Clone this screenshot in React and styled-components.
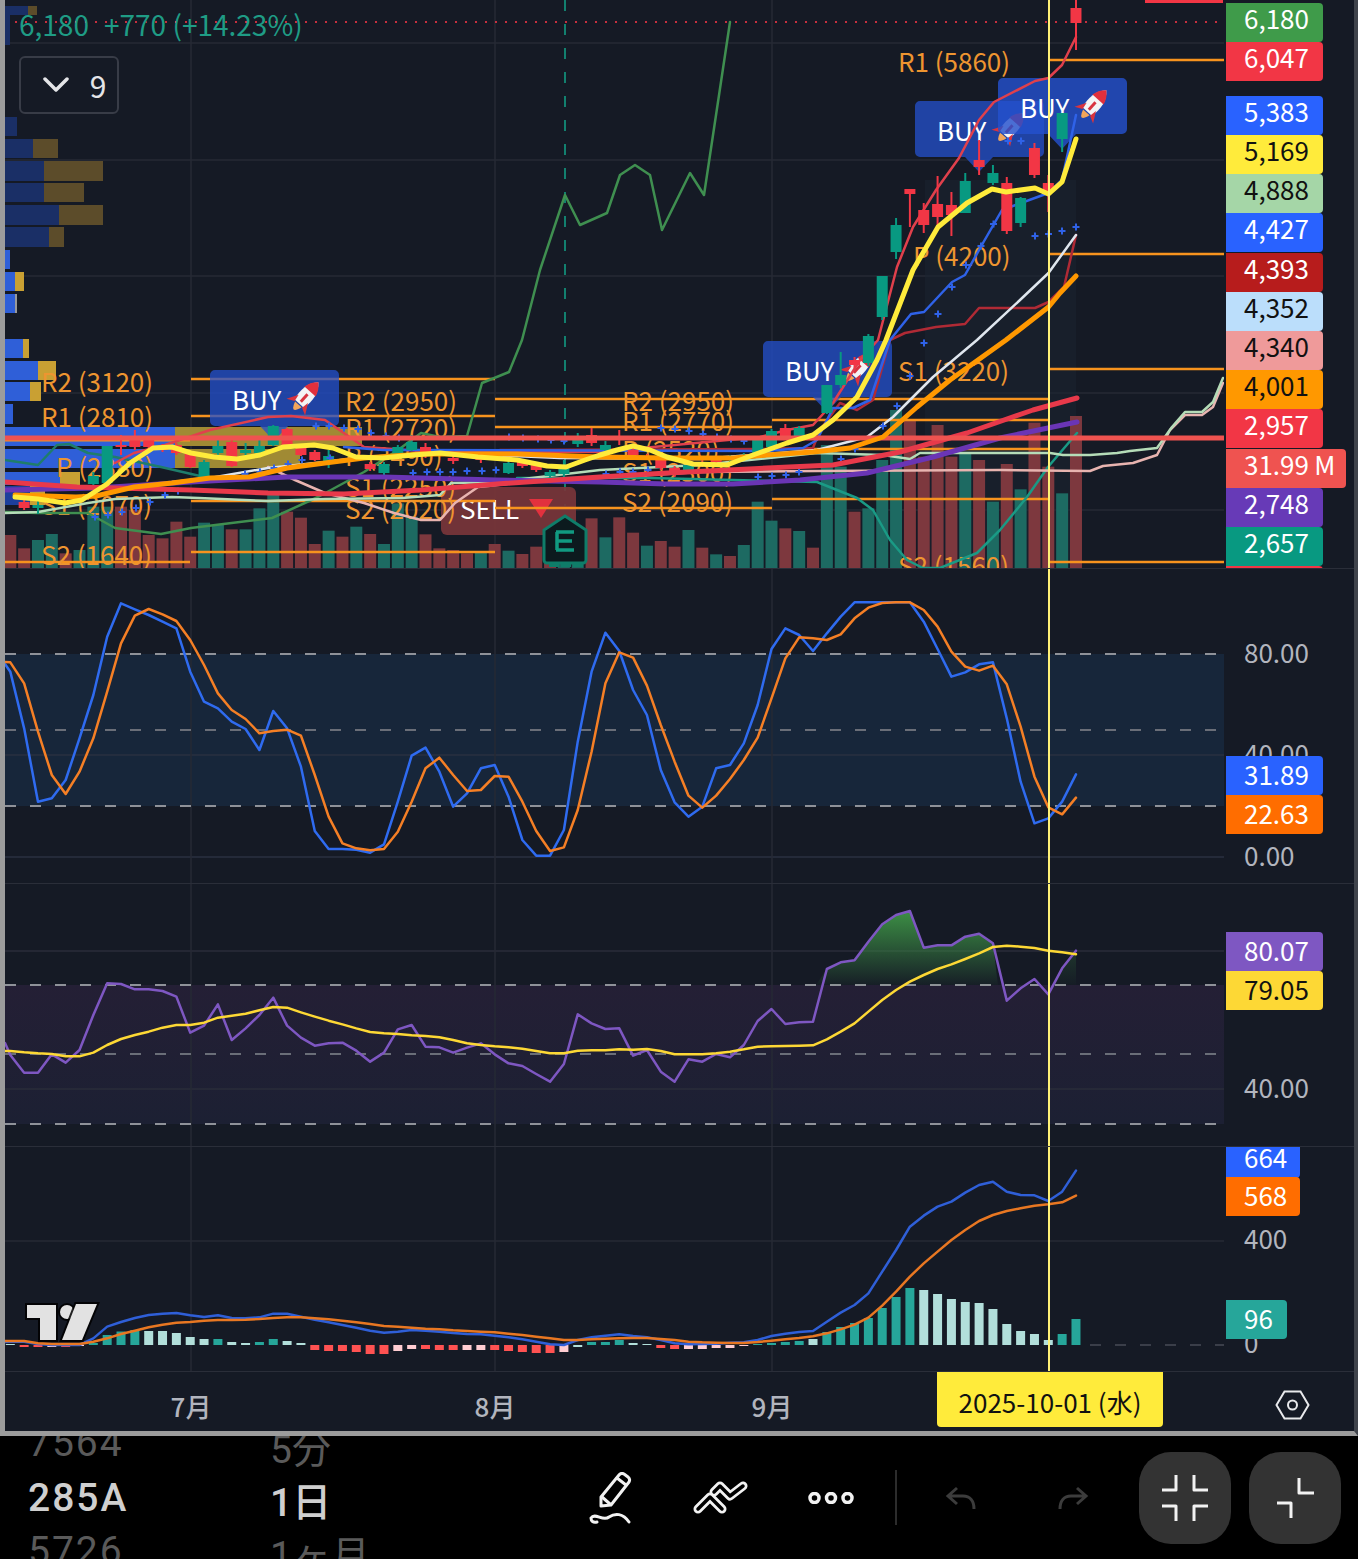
import styled, { createGlobalStyle } from "styled-components";

const GlobalStyle = createGlobalStyle`
  html, body {
    margin: 0;
    background: #000;
  }
  #root {
    width: 1358px;
    height: 1559px;
    overflow: hidden;
  }
`;

const FONT = `"Noto Sans CJK JP", "Noto Sans", sans-serif`;

const Page = styled.div`
  width: 1358px;
  height: 1559px;
  display: flex;
  flex-direction: column;
  background: #000;
  font-family: ${FONT};
`;

const ChartFrame = styled.div`
  height: 1431px;
  flex: none;
  display: flex;
  flex-direction: column;
  background: #151a25;
  border-left: 5px solid #9c9c9c;
  border-right: 4px solid #3f434b;
  border-bottom: 5px solid #9c9c9c;
`;

const Pane = styled.div`
  height: ${(p) => p.$height}px;
  flex: none;
  display: flex;
  position: relative;
  overflow: hidden;
  border-bottom: 1px solid #2a2e39;
  box-sizing: border-box;
`;

const Plot = styled.svg`
  width: 1219px;
  flex: none;
  display: block;
`;

const PriceAxis = styled.div`
  flex: 1;
  position: relative;
`;

const AxisTag = styled.div`
  position: absolute;
  left: 2px;
  top: ${(p) => p.$top}px;
  height: ${(p) => p.$h || 39}px;
  width: ${(p) => p.$w || 97}px;
  box-sizing: border-box;
  padding-left: 18px;
  padding-bottom: ${(p) => p.$lift || 4}px;
  display: flex;
  align-items: center;
  border-radius: 0 4px 4px 0;
  background: ${(p) => p.$bg};
  color: ${(p) => p.$fg || "#fff"};
  font-size: 26px;
  line-height: 1;
`;

const AxisValue = styled.div`
  position: absolute;
  left: 20px;
  top: ${(p) => p.$y}px;
  transform: translateY(-50%);
  color: #b2b5be;
  font-size: 26px;
  line-height: 1;
`;

const LegendText = styled.text`
  font-family: ${FONT};
  font-size: 28px;
  fill: #1f9c85;
`;

const LevelText = styled.text`
  font-family: ${FONT};
  font-size: 26px;
  fill: #ee9530;
`;

const TagText = styled.text`
  font-family: ${FONT};
  font-size: 26px;
  fill: #fff;
`;

const CollapseBox = styled.div`
  position: absolute;
  left: 14px;
  top: 56px;
  width: 100px;
  height: 58px;
  box-sizing: border-box;
  display: flex;
  align-items: center;
  justify-content: center;
  gap: 21px;
  padding-left: 11px;
  border: 2px solid #383c47;
  border-radius: 6px;
  color: #e4e5e8;
  font-size: 30px;
`;

const TimeAxis = styled.div`
  flex: 1;
  position: relative;
  display: flex;
  align-items: center;
  justify-content: flex-end;
  padding: 7px 44px 0 0;
`;

const MonthLabel = styled.div`
  position: absolute;
  left: ${(p) => p.$x}px;
  top: 16px;
  transform: translateX(-50%);
  color: #b2b5be;
  font-size: 26px;
  font-weight: 500;
  line-height: 36px;
`;

const DateTag = styled.div`
  position: absolute;
  left: 932px;
  top: 0;
  width: 226px;
  height: 55px;
  box-sizing: border-box;
  padding-top: 4px;
  display: flex;
  align-items: center;
  justify-content: center;
  background: #ffeb3b;
  color: #111;
  font-size: 26px;
  border-radius: 0 0 4px 4px;
`;

const Toolbar = styled.div`
  flex: 1;
  min-height: 0;
  display: flex;
  align-items: center;
  background: #000;
  overflow: hidden;
  padding-right: 17px;
`;

const PickerColumn = styled.div`
  width: ${(p) => p.$width}px;
  height: 123px;
  flex: none;
  padding-left: ${(p) => p.$indent}px;
  box-sizing: border-box;
  display: flex;
  flex-direction: column;
  align-items: flex-start;
  justify-content: center;
  gap: 5px;
  overflow: hidden;
`;

const PickerItem = styled.div`
  height: 48px;
  flex: none;
  display: flex;
  align-items: center;
  font-family: Roboto, ${FONT};
  font-size: 39px;
  font-weight: ${(p) => (p.$active ? 500 : 400)};
  letter-spacing: ${(p) => p.$spacing || 0}px;
  white-space: nowrap;
  color: ${(p) => (p.$active ? "#cfcfcf" : "#5a5a5a")};
  transform: translateY(${(p) => p.$shift || 0}px);
`;

const ToolSlot = styled.div`
  width: ${(p) => p.$width}px;
  flex: none;
  display: flex;
  justify-content: center;
  align-items: center;
`;

const ToolDivider = styled.div`
  width: 2px;
  height: 55px;
  flex: none;
  margin: 0 8px 0 9px;
  background: #2c2c2c;
`;

const SquareButton = styled.div`
  width: 92px;
  height: 92px;
  flex: none;
  margin-left: ${(p) => p.$gap}px;
  display: flex;
  align-items: center;
  justify-content: center;
  background: #333;
  border-radius: 32px;
`;

const barX = (i) => 10.3 + 13.84 * i;
const toPoints = (list) => list.map(([x, y]) => `${x},${y}`).join(" ");
const series = (top, values, start = 0) =>
  values.map((v, i) => [barX(i + start), top + v / 3]);

const stochBlue = [[5, 664], ...series(575, [290, 460, 680, 670, 615, 490, 360, 185, 85, 103, 120, 140, 160, 290, 380, 400, 440, 462, 525, 408, 460, 575, 768, 822, 822, 824, 833, 808, 680, 542, 518, 590, 695, 655, 580, 570, 665, 795, 842, 842, 765, 500, 290, 173, 228, 345, 420, 585, 682, 725, 695, 580, 570, 505, 390, 222, 160, 180, 228, 175, 125, 82, 82, 82, 82, 82, 140, 222, 305, 292, 268, 262, 430, 620, 745, 730, 680, 598])];
const stochOrange = [[5, 662], ...series(575, [262, 325, 470, 600, 657, 590, 490, 350, 205, 122, 102, 118, 138, 195, 270, 355, 405, 432, 475, 468, 464, 482, 600, 725, 805, 820, 826, 822, 770, 680, 580, 548, 600, 648, 645, 603, 605, 680, 768, 828, 817, 705, 530, 325, 232, 248, 332, 450, 560, 662, 698, 662, 612, 555, 488, 370, 250, 187, 190, 195, 178, 130, 98, 84, 82, 82, 105, 155, 230, 275, 287, 272, 328, 455, 605, 697, 718, 668])];

const rsiPoints = series(885, [510, 563, 563, 508, 533, 495, 390, 295, 297, 313, 313, 318, 335, 443, 422, 358, 465, 430, 390, 338, 422, 458, 482, 475, 473, 497, 530, 503, 433, 420, 485, 487, 503, 488, 475, 508, 535, 543, 567, 590, 537, 388, 415, 432, 430, 512, 495, 560, 590, 523, 530, 507, 517, 480, 408, 372, 417, 412, 410, 252, 232, 226, 170, 118, 90, 78, 188, 181, 181, 155, 146, 175, 347, 310, 282, 328, 250, 197]);
const rsiPurple = [[5, 1043], ...rsiPoints];
const rsiYellow = [[5, 1051], ...series(885, [498, 502, 505, 507, 514, 514, 503, 480, 462, 450, 440, 428, 420, 420, 413, 398, 392, 386, 376, 366, 368, 382, 395, 407, 418, 430, 441, 445, 447, 451, 453, 457, 465, 475, 480, 484, 487, 491, 498, 505, 505, 497, 496, 496, 493, 494, 492, 498, 508, 508, 508, 505, 500, 493, 485, 484, 483, 482, 481, 463, 440, 415, 380, 345, 315, 290, 270, 252, 238, 222, 205, 186, 182, 185, 189, 197, 202, 208])];
const rsiFill = [[barX(58) + 3, 985], ...rsiPoints.slice(59, 72), [barX(71) + 5, 985]];
const rsiFillEnd = [[barX(75) + 5, 985], ...rsiPoints.slice(76), [barX(77), 985]];

const macdBlue = [
  [5, 1342],
  ...series(1290, [155, 155, 162, 165, 165, 165, 145, 110, 96, 84, 75, 71, 69, 76, 81, 76, 84, 85, 82, 71, 71, 80, 89, 97, 105, 113, 122, 128, 125, 120, 122, 125, 129, 132, 133, 137, 142, 148, 155, 163, 165, 150, 142, 137, 133, 138, 142, 150, 160]),
  ...series(1145, [598, 597, 596, 593, 592, 585, 573, 566, 561, 558, 530, 503, 480, 445, 380, 315, 245, 212, 185, 170, 143, 120, 110, 140, 150, 151, 168, 140, 77], 49),
];
const macdOrange = [
  [5, 1341],
  ...series(1290, [153, 153, 160, 162, 162, 162, 155, 145, 132, 122, 112, 104, 98, 96, 92, 90, 90, 89, 87, 84, 82, 82, 85, 88, 92, 97, 102, 108, 110, 113, 116, 118, 121, 123, 125, 127, 131, 135, 140, 145, 150, 150, 148, 146, 145, 144, 144, 147, 150]),
  ...series(1145, [590, 592, 593, 594, 594, 591, 587, 583, 579, 574, 565, 553, 539, 518, 482, 440, 395, 355, 320, 285, 255, 228, 210, 198, 190, 182, 178, 172, 152], 49),
];

const HIST_COLORS = { g: "#26a69a", l: "#b2dfdb", r: "#ff5252", p: "#ffcdd2" };
const histogram = [
  [1, "l"], [-2, "r"], [-2, "r"], [-2, "p"], [-2, "r"], [-1, "p"], [2, "g"], [10, "g"], [13.5, "g"], [15, "g"], [14, "l"], [14, "l"], [12, "l"], [8, "l"], [6, "l"], [6, "g"], [3, "l"], [2, "l"], [3, "g"], [6, "g"], [4, "l"], [2, "l"],
  [-5, "r"], [-6, "r"], [-6, "r"], [-7, "r"], [-9, "r"], [-9, "r"], [-6, "p"], [-4, "p"], [-4, "r"], [-5, "r"], [-5, "r"], [-5, "p"], [-5, "p"], [-5, "r"], [-6, "r"], [-7, "r"], [-8, "r"], [-8, "r"], [-7, "p"], [-2, "l"],
  [3, "g"], [3, "g"], [5, "g"], [2, "l"], [1, "l"], [-3, "r"], [-4, "r"], [-4, "p"], [-4, "p"], [-3, "p"], [-3, "p"], [-1, "p"], [1, "g"], [2, "g"], [3, "g"], [4, "g"], [6, "l"],
  [13, "g"], [18, "g"], [22, "g"], [27, "g"], [37, "g"], [48, "g"], [57, "g"], [55, "l"], [51, "l"], [46, "l"], [43, "l"], [42, "l"], [36, "l"], [21, "l"], [14, "l"], [11, "l"], [5, "l"], [11, "g"], [26, "g"],
];

const VOL_COLORS = { g: "#1d6a62", r: "#7d383e" };
const volume = [
  [585, "r"], [625, "r"], [600, "g"], [582, "g"], [640, "r"], [630, "g"], [500, "g"], [500, "g"], [500, "r"], [510, "r"], [585, "r"], [595, "r"], [545, "r"], [590, "r"], [548, "g"], [555, "g"], [568, "r"], [568, "g"], [505, "g"], [465, "g"],
  [515, "r"], [533, "r"], [612, "r"], [572, "g"], [590, "r"], [560, "g"], [582, "r"], [612, "g"], [490, "g"], [530, "g"], [583, "r"], [625, "r"], [630, "r"], [640, "r"], [638, "g"], [612, "r"], [632, "g"], [642, "r"], [620, "r"], [625, "r"],
  [610, "g"], [610, "g"], [535, "r"], [592, "g"], [532, "r"], [578, "r"], [617, "g"], [603, "r"], [620, "r"], [570, "g"], [623, "r"], [643, "g"], [648, "r"], [615, "g"], [485, "g"], [542, "g"], [565, "r"], [573, "g"], [623, "r"],
  [315, "g"], [380, "g"], [515, "r"], [505, "g"], [360, "g"], [210, "g"], [240, "r"], [350, "r"], [255, "r"], [350, "r"], [340, "g"], [360, "r"], [485, "g"], [372, "r"], [448, "g"], [248, "r"], [380, "r"], [460, "g"], [228, "r"],
];

// index, body top, body bottom, wick top, wick bottom, colour
const candles = [
  [1, 502, 508, 500, 510, "r"], [2, 505, 508, 500, 514, "g"], [6, 476, 484, 472, 486, "g"], [7, 446, 483, 446, 484, "g"], [8, 445, 447, 435, 455, "r"], [9, 438, 447, 430, 450, "r"], [10, 438, 447, 436, 449, "r"], [11, 447, 450, 444, 452, "r"], [12, 445, 453, 443, 455, "r"], [13, 453, 467, 451, 468, "r"], [14, 462, 480, 460, 482, "g"], [15, 446, 453, 440, 455, "g"], [16, 442, 466, 440, 467, "r"], [17, 450, 453, 443, 458, "g"], [18, 446, 453, 436, 455, "g"], [19, 426, 445, 425, 446, "g"], [20, 429, 445, 428, 446, "r"], [21, 448, 455, 446, 456, "r"], [22, 452, 460, 450, 461, "r"], [23, 456, 463, 450, 468, "g"],
  [26, 464, 469, 462, 471, "r"], [27, 464, 473, 462, 475, "g"], [28, 447, 457, 445, 459, "g"], [29, 442, 450, 435, 451, "g"], [30, 447, 453, 443, 458, "r"], [32, 458, 461, 455, 464, "r"], [34, 458, 460, 455, 463, "r"], [36, 463, 473, 460, 474, "g"], [37, 462, 466, 460, 468, "r"], [38, 465, 470, 463, 472, "r"], [39, 472, 476, 470, 478, "g"], [40, 466, 474, 460, 480, "g"], [41, 437, 444, 433, 447, "g"], [42, 435, 443, 428, 446, "r"], [43, 445, 450, 441, 452, "g"], [44, 437, 440, 430, 445, "r"], [45, 450, 455, 448, 457, "r"], [46, 456, 458, 454, 460, "r"], [47, 460, 468, 458, 470, "r"], [48, 468, 475, 466, 477, "r"], [49, 465, 470, 463, 472, "g"], [50, 462, 465, 460, 467, "r"], [51, 458, 462, 456, 464, "r"], [52, 457, 460, 455, 462, "g"], [53, 455, 458, 453, 460, "g"], [54, 440, 453, 438, 455, "g"], [55, 431, 447, 429, 448, "g"], [56, 428, 438, 424, 440, "r"], [57, 428, 438, 426, 440, "g"],
  [59, 385, 413, 385, 414, "g"], [60, 375, 385, 352, 388, "g"], [61, 360, 365, 357, 368, "r"], [62, 336, 363, 334, 366, "g"], [63, 276, 317, 276, 320, "g"], [64, 225, 252, 218, 259, "g"], [65, 189, 194, 189, 227, "r"], [66, 210, 225, 203, 233, "r"], [67, 204, 217, 176, 227, "r"], [68, 205, 215, 192, 236, "r"], [69, 181, 213, 173, 213, "g"], [70, 160, 167, 140, 175, "r"], [71, 173, 183, 165, 185, "g"], [72, 183, 231, 177, 234, "r"], [73, 198, 223, 197, 227, "g"], [74, 148, 175, 143, 178, "r"], [75, 183, 191, 175, 212, "r"], [76, 113, 139, 113, 152, "g"], [77, 8, 23, 0, 50, "r"],
];

const markers = [
  [1035, 236], [1048.5, 234], [1062, 231], [1076, 227], [1021, 141], [1008, 141], [993.5, 224], [981, 246], [966, 265], [952, 287], [938, 314], [924, 343], [910, 376], [897, 406], [883, 426], [855, 449], [841, 459], [799, 472], [786, 475], [772, 476], [758, 477], [744, 441], [731, 439], [717, 437], [703, 434], [689, 431], [675, 429], [661, 428], [648, 470], [633, 472], [620, 472], [606, 474], [509, 437], [523, 438], [538, 439], [551, 440], [564, 441], [413, 473], [427, 472], [440, 472], [453, 472], [467, 471], [482, 471], [496, 470], [316, 426], [329, 426], [344, 428], [358, 429], [371, 433], [386, 436], [399, 438], [178, 491], [165, 495], [150, 502], [136, 508], [122, 512], [108, 515], [95, 517], [245, 474], [260, 472], [274, 468], [288, 464], [302, 460], [330, 458],
];

const lines = {
  yellow: [[15, 497], [38, 499], [65, 503], [82, 500], [107, 484], [130, 463], [153, 448], [172, 447], [191, 453], [214, 457], [237, 459], [260, 455], [283, 447], [314, 445], [333, 448], [356, 457], [383, 458], [413, 455], [440, 453], [478, 457], [517, 460], [547, 466], [566, 467], [585, 460], [600, 455], [617, 450], [633, 446], [650, 450], [667, 457], [693, 464], [727, 465], [753, 455], [787, 443], [813, 435], [833, 420], [857, 397], [877, 360], [886, 340], [913, 270], [938, 227], [967, 203], [992, 189], [1006, 192], [1035, 188], [1048.5, 194], [1062, 182], [1076, 139]],
  orange: [[15, 495], [76, 497], [96, 496], [134, 487], [172, 483], [210, 478], [249, 477], [287, 468], [325, 463], [364, 458], [421, 454], [459, 454], [517, 454], [600, 457], [667, 458], [733, 458], [767, 455], [813, 452], [850, 448], [883, 437], [917, 407], [950, 380], [1006, 340], [1048.5, 307], [1060, 293], [1076, 276]],
  white: [[172, 482], [210, 478], [268, 468], [325, 462], [364, 457], [440, 453], [560, 458], [700, 459], [817, 450], [867, 437], [893, 417], [933, 377], [977, 340], [1020, 300], [1048.5, 273], [1076, 235]],
  red: [[5, 482], [77, 487], [191, 490], [268, 493], [344, 494], [421, 490], [497, 484], [600, 477], [667, 473], [767, 468], [833, 465], [900, 452], [967, 433], [1033, 410], [1077, 398]],
  purple: [[5, 490], [96, 488], [191, 482], [287, 477], [383, 477], [497, 480], [600, 482], [667, 484], [733, 484], [800, 480], [867, 473], [933, 457], [1000, 438], [1077, 422]],
  pink: [[268, 467], [295, 480], [325, 493], [364, 503], [394, 513], [421, 520], [440, 520], [455, 503], [478, 487], [517, 483], [600, 478], [700, 472], [817, 471], [1000, 470], [1090, 471], [1103, 466], [1133, 463], [1157, 455], [1170, 430], [1185, 415], [1202, 415], [1213, 407], [1223, 383]],
  paleGreen: [[5, 513], [38, 512], [88, 503], [115, 499], [172, 497], [199, 498], [268, 501], [325, 499], [402, 498], [440, 495], [451, 483], [497, 482], [600, 470], [700, 465], [817, 453], [883, 455], [910, 459], [920, 453], [1050, 453], [1063, 455], [1090, 455], [1117, 453], [1130, 451], [1157, 448], [1172, 427], [1185, 412], [1202, 412], [1213, 402], [1223, 378]],
  darkRed: [[500, 450], [767, 449], [813, 448], [820, 430], [840, 403], [857, 410], [873, 400], [890, 340], [905, 333], [936, 327], [965, 324], [979, 308], [1035, 308], [1048.5, 302], [1064, 287], [1076, 235]],
  blue: [[344, 447], [383, 450], [413, 450], [767, 451], [803, 448], [817, 440], [833, 408], [853, 408], [870, 400], [890, 340], [911, 314], [924, 312], [952, 282], [965, 275], [983, 243], [1002, 210], [1048.5, 193], [1062, 180], [1076, 115]],
  upper: [[115, 463], [134, 453], [165, 445], [210, 430], [268, 417], [291, 416], [325, 420], [364, 447], [421, 451], [600, 452], [760, 437], [787, 430], [813, 425], [833, 403], [860, 360], [878, 340], [897, 267], [913, 227], [936, 190], [959, 158], [979, 120], [994, 102], [1035, 81], [1048.5, 78], [1062, 65], [1076, 37]],
  lower: [[5, 460], [38, 465], [57, 445], [69, 444], [88, 453], [115, 457], [161, 467], [200, 476]],
  lagging: [[5, 512], [38, 513], [88, 513], [115, 528], [161, 534], [191, 528], [272, 518], [318, 497], [364, 472], [398, 450], [421, 433], [440, 437], [467, 436], [482, 383], [509, 372], [522, 340], [540, 270], [565, 195], [580, 225], [607, 213], [620, 175], [635, 165], [650, 175], [662, 230], [690, 173], [704, 195], [730, 22]],
  bollingerLow: [[517, 478], [650, 478], [817, 482], [857, 498], [873, 510], [890, 540], [907, 560], [923, 568], [940, 568], [977, 553], [1000, 530], [1027, 497], [1048, 467], [1077, 433]],
};

const levels = [
  [5, 190, 562], [191, 495, 379], [191, 495, 416], [191, 495, 501], [191, 495, 552],
  [495, 772, 399], [495, 772, 427], [495, 772, 508], [772, 1049, 399], [772, 1049, 420], [772, 1049, 449], [772, 1049, 499],
  [1049, 1224, 60], [1049, 1224, 254], [1049, 1224, 369], [1049, 1224, 562],
];

const levelLabels = [
  ["R2 (3120)", 41, 380], ["R1 (2810)", 41, 415], ["P (2380)", 56, 465], ["S1 (2070)", 41, 503], ["S2 (1640)", 41, 553],
  ["R2 (2950)", 345, 399], ["R1 (2720)", 345, 426], ["P (2490)", 345, 454], ["S1 (2250)", 345, 485], ["S2 (2020)", 345, 507],
  ["R2 (2950)", 622, 399], ["R1 (2770)", 622, 419], ["P (2520)", 622, 448], ["S1 (2300)", 622, 470], ["S2 (2090)", 622, 500],
  ["R1 (5860)", 898, 60], ["P (4200)", 913, 254], ["S1 (3220)", 898, 369], ["S2 (1560)", 898, 564],
];

const DIM_BLUE = "#1a2f66";
const DIM_TAN = "#5c4c2a";
const BLUE = "#2f5fd8";
const TAN = "#c9a033";

// y, height, blue end, tan end
const profile = [
  [6, 9, 28, 37, DIM_BLUE, DIM_TAN], [15, 30, 10, 10, DIM_BLUE, DIM_TAN], [117, 19, 17, 17, DIM_BLUE, DIM_TAN], [139, 19, 33, 58, DIM_BLUE, DIM_TAN], [161, 20, 44, 103, DIM_BLUE, DIM_TAN], [183, 19, 44, 84, DIM_BLUE, DIM_TAN], [205, 20, 59, 103, DIM_BLUE, DIM_TAN], [227, 20, 49, 64, DIM_BLUE, DIM_TAN],
  [250, 19, 10, 10, BLUE, TAN], [272, 19, 15, 24, BLUE, TAN], [294, 19, 15, 17, BLUE, "#999"], [339, 19, 23, 29, BLUE, TAN], [361, 19, 38, 56, BLUE, TAN], [382, 19, 30, 41, BLUE, TAN], [404, 20, 13, 13, BLUE, TAN],
  [427, 19, 175, 362, BLUE, "#a08a34"], [449, 19, 175, 300, BLUE, "#a08a34"], [472, 13, 60, 80, BLUE, TAN], [486, 19, 30, 45, "#1d3f9c", TAN],
];

const Polyline = ({ points, color, width = 2.5, opacity }) => (
  <polyline points={toPoints(points)} fill="none" stroke={color} strokeWidth={width} strokeLinejoin="round" strokeLinecap="round" opacity={opacity} />
);

const VLines = ({ top, bottom }) =>
  [191, 495, 772].map((x) => <line key={x} x1={x} x2={x} y1={top} y2={bottom} stroke="#262a34" strokeWidth="1.5" />);

const HLines = ({ ys, color = "#262a34", to = 1224 }) =>
  ys.map((y) => <line key={y} x1="5" x2={to} y1={y} y2={y} stroke={color} strokeWidth="1.5" />);

const Dashes = ({ ys, color = "#8f9299", from = 5 }) =>
  ys.map((y) => <line key={y} x1={from} x2="1224" y1={y} y2={y} stroke={color} strokeWidth="2" strokeDasharray="11 14" />);

const Crosshair = ({ top, bottom }) => <line x1="1049" x2="1049" y1={top} y2={bottom} stroke="#fff176" strokeWidth="2" />;

const Rocket = ({ x, y }) => (
  <g transform={`translate(${x} ${y}) rotate(42) scale(1.25)`}>
    <path d="M0 -16 C6 -10 7 -2 5 7 L-5 7 C-7 -2 -6 -10 0 -16Z" fill="#f4f4f4" />
    <path d="M0 -16 C3.5 -13 5 -10 6 -6 L-6 -6 C-5 -10 -3.5 -13 0 -16Z" fill="#e0303c" />
    <rect x="-1.2" y="-3" width="2.4" height="8" fill="#d8343f" />
    <path d="M-5 2 L-10 11 L-4 8Z M5 2 L10 11 L4 8Z" fill="#d8343f" />
    <path d="M-3.5 8 Q0 19 3.5 8Z" fill="#f2a65a" />
  </g>
);

const BuyTag = ({ x, y, opacity = 0.76 }) => (
  <g>
    <path
      d={`M${x + 5} ${y} H${x + 124} a5 5 0 0 1 5 5 V${y + 51} a5 5 0 0 1 -5 5 H${x + 78} L${x + 64} ${y + 71} L${x + 50} ${y + 56} H${x + 5} a5 5 0 0 1 -5 -5 V${y + 5} a5 5 0 0 1 5 -5Z`}
      fill={`rgba(36,80,205,${opacity})`}
    />
    <TagText x={x + 22} y={y + 28} dominantBaseline="central">BUY</TagText>
    <Rocket x={x + 95} y={y + 27} />
  </g>
);

const Candle = ({ data }) => {
  const [i, top, bottom, high, low, kind] = data;
  const x = barX(i);
  const color = kind === "g" ? "#089981" : "#f23645";
  return (
    <g>
      <line x1={x} x2={x} y1={high} y2={low} stroke={color} strokeWidth="2" />
      <rect x={x - 5.5} y={top} width="11" height={bottom - top} fill={color} />
    </g>
  );
};

const Marker = ({ x, y }) => (
  <path d={`M${x - 3.5} ${y} H${x + 3.5} M${x} ${y - 3.5} V${y + 3.5}`} stroke="#2f62e8" strokeWidth="2" />
);

const EarningsBadge = () => (
  <g>
    <path d="M565 516 L586 530 V560 a3 3 0 0 1 -3 3 H547 a3 3 0 0 1 -3 -3 V530Z" fill="#0c1a1e" stroke="#0f7d69" strokeWidth="3" />
    <path d="M556 532 H574 M556 541 H572 M556 550 H574 M557 532 V550" stroke="#119a81" strokeWidth="3.5" fill="none" />
    <path d="M549 565 H559 M561 565 H571 M573 565 H583" stroke="#0f7d69" strokeWidth="4" />
  </g>
);

const MainPlot = () => (
  <Plot viewBox="5 0 1219 568" height="568">
    <defs>
      <clipPath id="main-clip">
        <rect x="5" y="0" width="1219" height="568" />
      </clipPath>
    </defs>
    <g clipPath="url(#main-clip)">
      <HLines ys={[43, 160, 276, 393, 510]} />
      <VLines top={0} bottom={568} />
      <rect x="925" y="180" width="151" height="388" fill="#1b2532" opacity="0.55" />
      <line x1="5" x2="1224" y1="22" y2="22" stroke="#f23645" strokeWidth="2" strokeDasharray="2 8" opacity="0.8" />
      <rect x="1145" y="0" width="78" height="3" fill="#f23645" />
      {profile.map(([y, h, b, t, bc, tc]) => (
        <g key={y}>
          {t > b && <rect x={b} y={y} width={t - b} height={h} fill={tc} />}
          <rect x="5" y={y} width={b - 5} height={h} fill={bc} />
        </g>
      ))}
      {volume.map(([v, kind], i) => (
        <rect key={i} x={barX(i) - 6} y={340 + v / 3} width="12" height={568 - 340 - v / 3} fill={VOL_COLORS[kind]} />
      ))}
      <line x1="565" x2="565" y1="0" y2="506" stroke="#12806f" strokeWidth="2" strokeDasharray="11 13" />
      <rect x="441" y="487" width="135" height="48" rx="6" fill="#7a353a" opacity="0.92" />
      <TagText x="460" y="507" dominantBaseline="central">SELL</TagText>
      <path d="M529 499 H553 L541 518Z" fill="#e2313e" />
      <line x1="5" x2="190" y1="440" y2="440" stroke="#f7931e" strokeWidth="3" />
      {levels.map(([a, b, y]) => (
        <line key={`${a}-${y}`} x1={a} x2={b} y1={y} y2={y} stroke="#f7931e" strokeWidth="2.5" />
      ))}
      {levelLabels.map(([text, x, y]) => (
        <LevelText key={`${x}-${y}`} x={x} y={y} dominantBaseline="central">{text}</LevelText>
      ))}
      <Polyline points={lines.lagging} color="#3f8f50" />
      <Polyline points={lines.bollingerLow} color="#1a9a85" />
      <Polyline points={lines.lower} color="#1f7d6b" />
      <BuyTag x={210} y={370} />
      <BuyTag x={763} y={341} />
      <BuyTag x={915} y={101} />
      <BuyTag x={998} y={78} opacity={0.82} />
      <Polyline points={lines.pink} color="#e8b4b0" />
      <Polyline points={lines.paleGreen} color="#b5dcb8" />
      <Polyline points={lines.darkRed} color="#b02a35" />
      <Polyline points={lines.upper} color="#e0404c" />
      <Polyline points={lines.blue} color="#2f62e8" />
      <Polyline points={lines.white} color="#dfe6ee" />
      {candles.map((c) => (
        <Candle key={c[0]} data={c} />
      ))}
      {markers.map(([x, y]) => (
        <Marker key={`${x}-${y}`} x={x} y={y} />
      ))}
      <EarningsBadge />
      <Polyline points={lines.purple} color="#6a35b5" width={5} />
      <Polyline points={lines.red} color="#e8394a" width={5} />
      <line x1="5" x2="1224" y1="438" y2="438" stroke="#ef5350" strokeWidth="5" />
      <Polyline points={lines.orange} color="#ff9800" width={5} />
      <Polyline points={lines.yellow} color="#ffeb3b" width={5} />
      <Crosshair top={0} bottom={568} />
      <LegendText y="24" dominantBaseline="central">
        <tspan x="19">6,180</tspan>
        <tspan x="104">+770 (+14.23%)</tspan>
      </LegendText>
    </g>
  </Plot>
);

const StochPlot = () => (
  <Plot viewBox="5 569 1219 314" height="314">
    <rect x="5" y="654" width="1219" height="152" fill="#17263a" />
    <HLines ys={[755, 857]} color="#2a3040" />
    <VLines top={569} bottom={883} />
    <Dashes ys={[654, 806]} />
    <Dashes ys={[730]} color="#6a6e78" />
    <Polyline points={stochBlue} color="#2f6bf0" />
    <Polyline points={stochOrange} color="#f57f25" />
    <Crosshair top={569} bottom={883} />
  </Plot>
);

const RsiPlot = () => (
  <Plot viewBox="5 884 1219 262" height="262">
    <defs>
      <linearGradient id="rsi-fill" x1="0" x2="0" y1="911" y2="985" gradientUnits="userSpaceOnUse">
        <stop offset="0" stopColor="#3c8f45" />
        <stop offset="1" stopColor="#3c8f45" stopOpacity="0.04" />
      </linearGradient>
      <linearGradient id="rsi-band" x1="0" x2="0" y1="0" y2="1">
        <stop offset="0" stopColor="#241f35" />
        <stop offset="1" stopColor="#1c2033" />
      </linearGradient>
    </defs>
    <rect x="5" y="985" width="1219" height="139" fill="url(#rsi-band)" />
    <HLines ys={[951, 1089]} color="#2a2d3a" />
    <VLines top={884} bottom={1146} />
    <Dashes ys={[985, 1124]} />
    <Dashes ys={[1054]} color="#6a6e78" />
    <polygon points={toPoints(rsiFill)} fill="url(#rsi-fill)" />
    <polygon points={toPoints(rsiFillEnd)} fill="url(#rsi-fill)" opacity="0.5" />
    <Polyline points={rsiPurple} color="#7e57c2" />
    <Polyline points={rsiYellow} color="#fdd835" />
    <Crosshair top={884} bottom={1146} />
  </Plot>
);

const MacdPlot = () => (
  <Plot viewBox="5 1147 1219 225" height="225">
    <HLines ys={[1241]} />
    <VLines top={1147} bottom={1372} />
    <Dashes ys={[1345]} color="#3a3e49" from={1090} />
    {histogram.map(([v, kind], i) => (
      <rect key={i} x={barX(i) - 4.5} y={v > 0 ? 1345 - v : 1345} width="9" height={Math.abs(v)} fill={HIST_COLORS[kind]} />
    ))}
    <Polyline points={macdBlue} color="#2f5fd8" />
    <Polyline points={macdOrange} color="#e87722" />
    <Crosshair top={1147} bottom={1372} />
    <g stroke="#000" strokeWidth="4" paintOrder="stroke" fill="#e2e2e2" strokeOpacity="0.85">
      <path d="M27 1305 H56 V1340 H40 V1318 H27Z" />
      <circle cx="67" cy="1312" r="7" />
      <path d="M76 1304 H97 L82 1340 H62Z" />
    </g>
  </Plot>
);

// text, top, background, text colour, width
const mainTags = [
  ["6,180", 3, "#3f9b4a"], ["6,047", 42, "#f23645"], ["5,383", 96, "#2962ff"], ["5,169", 135, "#ffeb3b", "#111"], ["4,888", 174, "#a5d6a7", "#111"], ["4,427", 213, "#2962ff"], ["4,393", 253, "#b71c1c"], ["4,352", 292, "#bbdefb", "#111"], ["4,340", 331, "#ef9a9a", "#111"], ["4,001", 370, "#ff9800", "#111"], ["2,957", 409, "#f23645"],
  ["31.99\u2009M", 449, "#ef5350", "#fff", 120], ["2,748", 488, "#673ab7"], ["2,657", 527, "#089981"], ["", 566, "#f23645"],
];

const PenIcon = () => (
  <svg width="44" height="52" viewBox="0 0 44 52" fill="none" stroke="#f2f2f2" strokeWidth="3" strokeLinecap="round" strokeLinejoin="round">
    <path d="M12 25 L30 3 a4 4 0 0 1 5 -1 l4 3 a4 4 0 0 1 1 5 L22 33 L12 34Z" />
    <path d="M13 25 L21 32 M28 6 L37 13" />
    <path d="M2 46 C6 40 14 50 20 45 C26 41 34 41 40 50 M2 46 C2 49 4 51 8 50" />
  </svg>
);

const TrendIcon = () => (
  <svg width="56" height="34" viewBox="0 0 56 34" fill="none" strokeLinecap="round" strokeLinejoin="round">
    <g stroke="#f2f2f2" strokeWidth="9">
      <path d="M5 28 L17 16 L29 28" />
      <path d="M21 11 L27 5 L37 15 L50 5" />
    </g>
    <g stroke="#000" strokeWidth="3.5">
      <path d="M5 28 L17 16 L29 28" />
      <path d="M21 11 L27 5 L37 15 L50 5" />
    </g>
  </svg>
);

const DotsIcon = () => (
  <svg width="46" height="12" viewBox="0 0 46 12" fill="none" stroke="#f2f2f2" strokeWidth="3.5">
    <circle cx="6.5" cy="6" r="4.5" />
    <circle cx="23" cy="6" r="4.5" />
    <circle cx="39.5" cy="6" r="4.5" />
  </svg>
);

const ArrowIcon = ({ flip }) => (
  <svg width="32" height="24" viewBox="0 0 32 24" fill="none" stroke="#3c3c3c" strokeWidth="3" style={flip ? { transform: "scaleX(-1)" } : undefined}>
    <path d="M12 2 L3 10 L12 18 M3 10 H18 C25 10 29 15 29 23" />
  </svg>
);

const CollapseIcon = () => (
  <svg width="48" height="48" viewBox="0 0 48 48" fill="none" stroke="#f2f2f2" strokeWidth="3" strokeLinejoin="round">
    <path d="M1 16 H15 V1 M33 1 V16 H47 M1 32 H15 V47 M47 32 H33 V47" />
  </svg>
);

const CrossIcon = () => (
  <svg width="40" height="42" viewBox="0 0 40 42" fill="none" stroke="#f2f2f2" strokeWidth="3" strokeLinejoin="round">
    <path d="M24 1 V16 H39 M2 26 H16 V41" />
  </svg>
);

const SettingsIcon = () => (
  <svg width="35" height="30" viewBox="0 0 35 30" fill="none" stroke="#e8e9ec" strokeWidth="2">
    <path d="M1.5 15 L9.5 1.5 H25.5 L33.5 15 L25.5 28.5 H9.5Z" />
    <circle cx="17.5" cy="15" r="4.5" />
  </svg>
);

const Chevron = () => (
  <svg width="26" height="16" viewBox="0 0 26 16" fill="none" stroke="#e4e5e8" strokeWidth="3.5" strokeLinecap="round" strokeLinejoin="round">
    <path d="M2 2 L13 13 L24 2" />
  </svg>
);

export default function App() {
  return (
    <Page>
      <GlobalStyle />
      <ChartFrame>
        <Pane $height={569}>
          <MainPlot />
          <CollapseBox>
            <Chevron />
            <span>9</span>
          </CollapseBox>
          <PriceAxis>
            {mainTags.map(([text, top, bg, fg, w]) => (
              <AxisTag key={top} $top={top} $bg={bg} $fg={fg} $w={w} $lift={10}>
                {text}
              </AxisTag>
            ))}
          </PriceAxis>
        </Pane>
        <Pane $height={315}>
          <StochPlot />
          <PriceAxis>
            <AxisValue $y={83}>80.00</AxisValue>
            <AxisValue $y={184}>40.00</AxisValue>
            <AxisTag $top={187} $bg="#2962ff">31.89</AxisTag>
            <AxisTag $top={226} $bg="#ff6d00">22.63</AxisTag>
            <AxisValue $y={286}>0.00</AxisValue>
          </PriceAxis>
        </Pane>
        <Pane $height={263}>
          <RsiPlot />
          <PriceAxis>
            <AxisTag $top={48} $bg="#7e57c2">80.07</AxisTag>
            <AxisTag $top={87} $bg="#fdd835" $fg="#111">79.05</AxisTag>
            <AxisValue $y={203}>40.00</AxisValue>
          </PriceAxis>
        </Pane>
        <Pane $height={225}>
          <MacdPlot />
          <PriceAxis>
            <AxisTag $top={-8} $bg="#2962ff" $w={74}>664</AxisTag>
            <AxisTag $top={30} $bg="#ff6d00" $w={74}>568</AxisTag>
            <AxisValue $y={91}>400</AxisValue>
            <AxisValue $y={195}>0</AxisValue>
            <AxisTag $top={153} $bg="#26a69a" $w={61}>96</AxisTag>
          </PriceAxis>
        </Pane>
        <TimeAxis>
          <MonthLabel $x={186}>7月</MonthLabel>
          <MonthLabel $x={490}>8月</MonthLabel>
          <MonthLabel $x={767}>9月</MonthLabel>
          <DateTag>2025-10-01 (水)</DateTag>
          <SettingsIcon />
        </TimeAxis>
      </ChartFrame>
      <Toolbar>
        <PickerColumn $width={270} $indent={28}>
          <PickerItem $spacing={2} $shift={-2}>7564</PickerItem>
          <PickerItem $active $spacing={2}>285A</PickerItem>
          <PickerItem $spacing={2}>5726</PickerItem>
        </PickerColumn>
        <PickerColumn $width={286} $indent={0}>
          <PickerItem $shift={1}>5分</PickerItem>
          <PickerItem $active $shift={1}>1日</PickerItem>
          <PickerItem $shift={1}>1ヶ月</PickerItem>
        </PickerColumn>
        <ToolSlot $width={110}><PenIcon /></ToolSlot>
        <ToolSlot $width={110}><TrendIcon /></ToolSlot>
        <ToolSlot $width={110}><DotsIcon /></ToolSlot>
        <ToolDivider />
        <ToolSlot $width={112}><ArrowIcon /></ToolSlot>
        <ToolSlot $width={112}><ArrowIcon flip /></ToolSlot>
        <SquareButton $gap={10}><CollapseIcon /></SquareButton>
        <SquareButton $gap={18}><CrossIcon /></SquareButton>
      </Toolbar>
    </Page>
  );
}
